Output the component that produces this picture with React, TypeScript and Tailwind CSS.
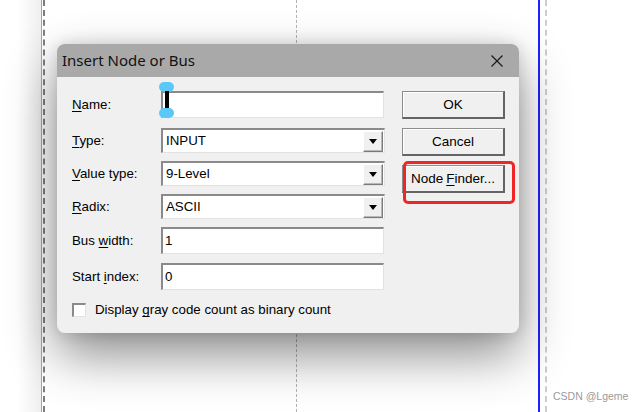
import React from "react";

const sunken =
  "bg-white border-t-2 border-l-2 border-t-[#8a8a8a] border-l-[#8a8a8a] border-b border-r border-b-[#e2e2e2] border-r-[#e2e2e2]";

function TextField({ value, children }: { value?: string; children?: React.ReactNode }) {
  return (
    <div className={`relative h-[27px] w-[223px] flex items-center ${sunken}`}>
      <span className="pl-[2px] text-[13.3px] text-black leading-none">{value}</span>
      {children}
    </div>
  );
}

function SelectField({ value }: { value: string }) {
  return (
    <div className={`h-[25px] w-[224px] flex items-center ${sunken}`}>
      <span className="pl-[3px] text-[13.3px] text-black leading-none">{value}</span>
      <div className="ml-auto mr-px h-[21px] w-[20px] flex items-center justify-center bg-[#f0f0f0] border border-t-white border-l-white border-b-[#7a7a7a] border-r-[#7a7a7a] shadow-[inset_-1px_-1px_0_#b8b8b8]">
        <svg width="8" height="5" viewBox="0 0 8 5">
          <path d="M0 0h8L4 5z" fill="#000" />
        </svg>
      </div>
    </div>
  );
}

function Row({ label, children, className = "" }: { label: React.ReactNode; children: React.ReactNode; className?: string }) {
  return (
    <div className={`flex items-center ${className}`}>
      <span className="w-[89px] text-[13.3px] text-black leading-none">{label}</span>
      {children}
    </div>
  );
}

function Button({ children }: { children: React.ReactNode }) {
  return (
    <div className="h-[28px] w-[103px] flex items-center justify-center bg-[#f0f0f0] border border-[#8c8c8c] border-b-2 border-r-2 border-b-[#646464] border-r-[#646464] shadow-[inset_1px_1px_0_#ffffff] text-[13.5px] text-black leading-none">
      {children}
    </div>
  );
}

export default function App() {
  return (
    <div className="relative w-[641px] h-[412px] bg-white overflow-hidden font-['Liberation_Sans',Arial,sans-serif]">
      {/* canvas behind the dialog */}
      <div className="absolute left-[18px] top-0 h-full w-[23px] bg-gradient-to-r from-white to-[#efefef]" />
      <div className="absolute left-[41px] top-0 h-full w-px bg-[#a6a6a6]" />
      <div className="absolute left-[43px] top-0 h-full border-l-2 border-dashed border-[#7e7e7e]" />
      <div className="absolute left-[296px] top-0 h-full border-l border-dashed border-[#b3b3b3]" />
      <div className="absolute left-[538px] top-0 h-full w-[2px] bg-[#2020ff]" />
      <div className="absolute left-[545px] top-0 h-full border-l-2 border-dashed border-[#cdcdcd]" />
      <span className="absolute left-[553px] top-[389px] text-[10.5px] text-[#9a9a9a]">CSDN @Lgeme</span>

      <div className="relative pl-[57px] pt-[44px]">
        <div className="w-[462px] h-[289px] rounded-[8px] bg-[#f0f0f0] overflow-hidden flex flex-col shadow-[0_22px_50px_rgba(0,0,0,0.45),0_0_16px_rgba(0,0,0,0.14)]">
          {/* title bar */}
          <div className="h-[33px] shrink-0 bg-[#a9a9a9] flex items-center justify-between pl-[5px] pr-[16px]">
            <span className="text-[15px] font-['Noto_Sans',sans-serif] text-[#111]">Insert Node or Bus</span>
            <svg width="12" height="12" viewBox="0 0 12 12">
              <path d="M0.5 0.5l11 11M11.5 0.5l-11 11" stroke="#1a1a1a" strokeWidth="1.2" />
            </svg>
          </div>

          <div className="flex pl-[15px] pt-[14px] pr-[14px]">
            <div className="flex flex-col">
              <Row label={<><u className="underline-offset-2">N</u>ame:</>}>
                <TextField>
                  <div className="absolute left-[-4px] top-[-11px] flex flex-col items-center">
                    <div className="h-[10px] w-[15px] rounded-full bg-[#5cc8f7]" />
                    <div className="h-[18px] w-[4px] -mt-[1px] bg-black" />
                    <div className="-mt-[1px] h-[10px] w-[15px] rounded-full bg-[#5cc8f7]" />
                  </div>
                </TextField>
              </Row>
              <Row className="mt-[10px]" label={<><u className="underline-offset-2">T</u>ype:</>}>
                <SelectField value="INPUT" />
              </Row>
              <Row className="mt-[8px]" label={<><u className="underline-offset-2">V</u>alue type:</>}>
                <SelectField value="9-Level" />
              </Row>
              <Row className="mt-[8px]" label={<><u className="underline-offset-2">R</u>adix:</>}>
                <SelectField value="ASCII" />
              </Row>
              <Row className="mt-[8px]" label={<>Bus <u className="underline-offset-2">w</u>idth:</>}>
                <TextField value="1" />
              </Row>
              <Row className="mt-[9px]" label={<>Start <u className="underline-offset-2">i</u>ndex:</>}>
                <TextField value="0" />
              </Row>
              <div className="mt-[13px] flex items-center">
                <div className={`h-[14px] w-[14px] ${sunken}`} />
                <span className="ml-[9px] text-[13.3px] text-black leading-none">
                  Display <u className="underline-offset-2">g</u>ray code count as binary count
                </span>
              </div>
            </div>

            <div className="ml-[17px] flex flex-col gap-[9px]">
              <Button>OK</Button>
              <Button>Cancel</Button>
              <div className="relative">
                <Button>
                  Node <u className="underline-offset-2 ml-[3px]">F</u>inder...
                </Button>
                <div className="absolute left-[1px] top-[-4px] h-[43px] w-[112px] rounded-[5px] border-[3px] border-[#ee2626]" />
              </div>
            </div>
          </div>
        </div>
      </div>
    </div>
  );
}
